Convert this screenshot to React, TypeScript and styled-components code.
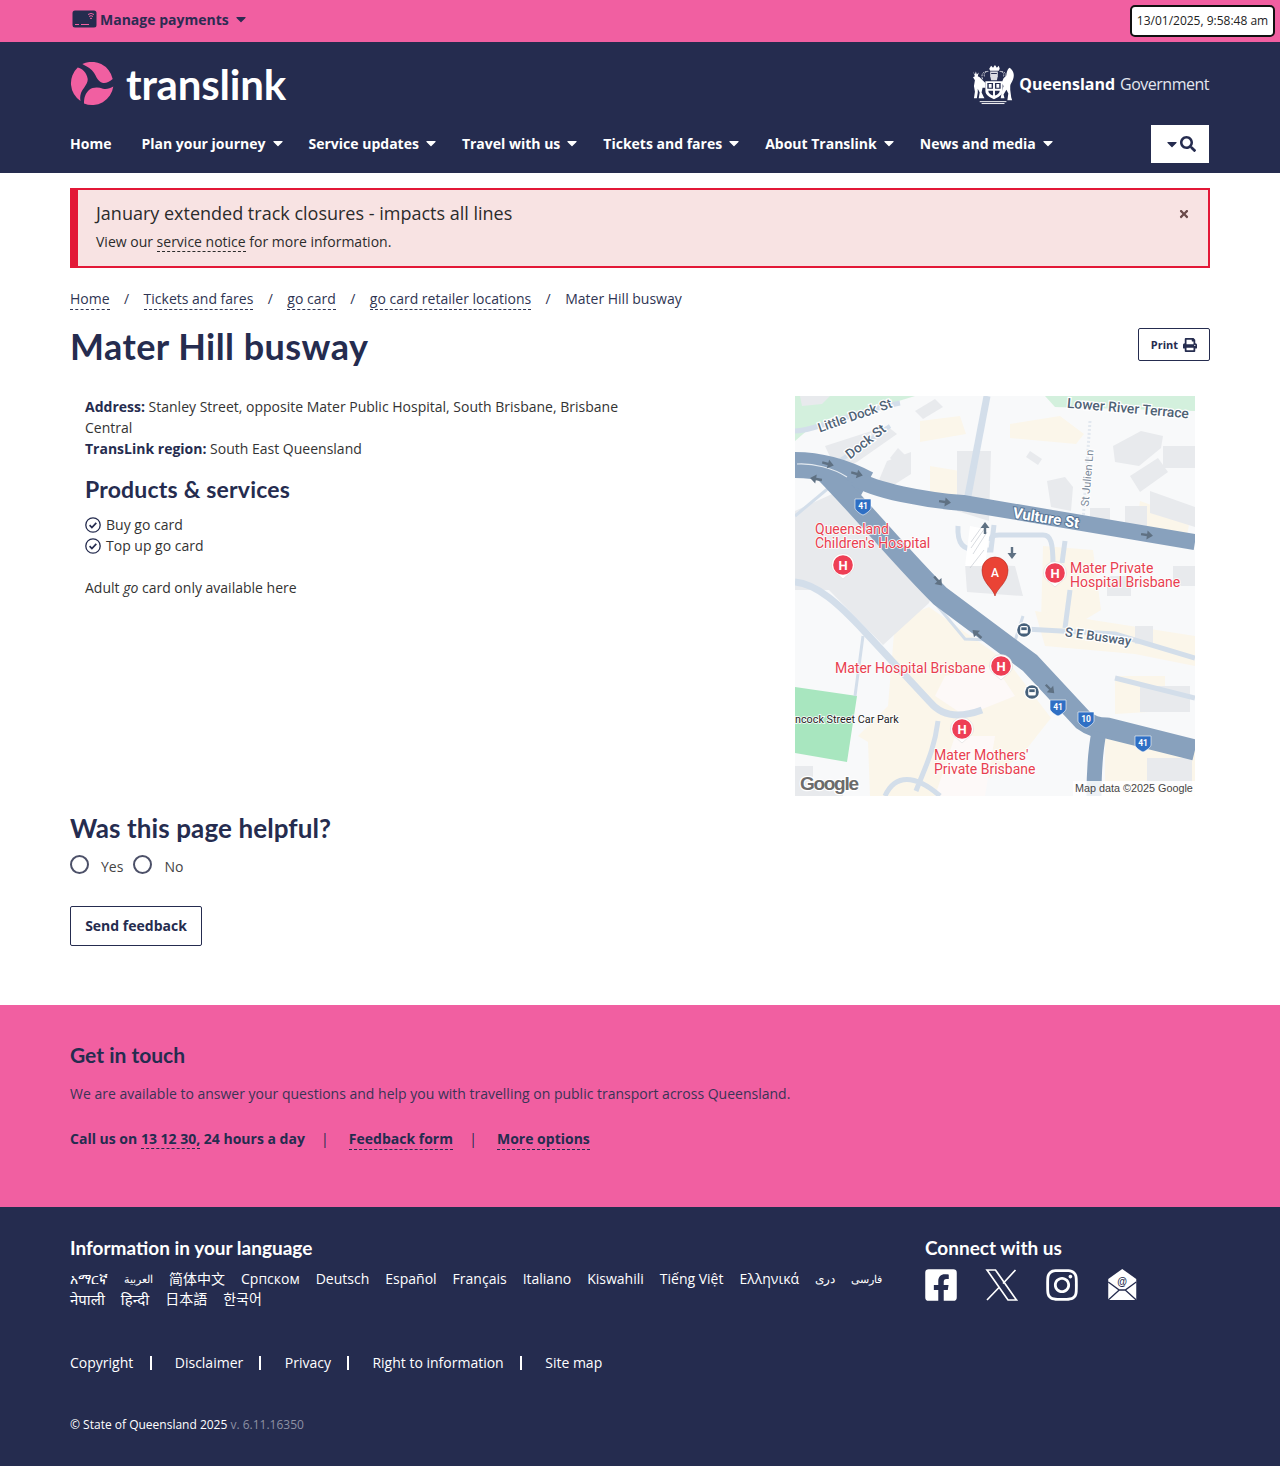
import { createGlobalStyle, styled } from "styled-components";
import { FaCaretDown, FaFacebookSquare, FaInstagram, FaPrint, FaSearch, FaTimes } from "react-icons/fa";

const PINK = "#f15fa1";
const NAVY = "#252c4f";

const GlobalStyle = createGlobalStyle`
  html, body { margin: 0; padding: 0; }
  body {
    font-family: "Open Sans", "Noto Sans", "Noto Sans CJK SC", sans-serif;
    font-size: 14px;
    line-height: 21px;
    color: ${NAVY};
    background: #fff;
  }
  * { box-sizing: border-box; }
`;

const Container = styled.div`
  width: 1140px;
  margin: 0 auto;
`;

const TopBar = styled.div`
  position: relative;
  height: 42px;
  background: ${PINK};
`;

const TopBarInner = styled(Container)`
  height: 38px;
  display: flex;
  align-items: center;
  padding-left: 2px;
`;

const Manage = styled.span`
  display: flex;
  align-items: center;
  font-weight: 700;
  font-size: 14px;
  color: #2d2b52;
`;

const Clock = styled.div`
  position: absolute;
  top: 5px;
  right: 5px;
  width: 145px;
  height: 32px;
  background: #fff;
  border: 2px solid #111;
  border-radius: 5px;
  padding-bottom: 2px;
  display: flex;
  align-items: center;
  justify-content: center;
  font-size: 12px;
  white-space: nowrap;
  color: #222;
`;

const Header = styled.header`
  background: ${NAVY};
  height: 131px;
  color: #fff;
`;

const Brand = styled(Container)`
  height: 83px;
  display: flex;
  align-items: center;
  justify-content: space-between;
`;

const Logo = styled.div`
  display: flex;
  align-items: center;
  gap: 12px;
`;

const LogoText = styled.span`
  font-family: "Lato", sans-serif;
  font-size: 42px;
  line-height: 44px;
  font-weight: 700;
  letter-spacing: -0.2px;
  color: #fff;
`;

const Gov = styled.div`
  display: flex;
  align-items: center;
  gap: 4px;
  padding-right: 1px;
  font-size: 16px;
  color: #e4e6ee;

  span {
    position: relative;
    top: 1px;
    letter-spacing: -0.5px;
  }

  b {
    color: #fff;
    font-weight: 700;
    margin-right: 5px;
    letter-spacing: 0;
  }
`;

const NavRow = styled(Container)`
  display: flex;
  align-items: center;
  justify-content: space-between;
  height: 38px;
  padding-right: 1px;
`;

const Nav = styled.ul`
  display: flex;
  align-items: center;
  list-style: none;
  margin: 0 0 2px;
  padding: 0;
`;

const NavItem = styled.li`
  display: flex;
  align-items: center;
  gap: 4px;
  padding-right: 23px;
  font-size: 14px;
  font-weight: 700;
  color: #fff;
  white-space: nowrap;

  &:first-child {
    padding-right: 30px;
  }
`;

const SearchButton = styled.button`
  width: 58px;
  height: 38px;
  border: 0;
  background: #fff;
  color: ${NAVY};
  display: flex;
  align-items: center;
  justify-content: center;
  gap: 0;
  font-size: 16px;
  padding: 0;
`;

const Alert = styled.div`
  position: relative;
  margin-top: 15px;
  height: 80px;
  background: #f8e3e3;
  border: 2px solid #e31837;
  border-left-width: 8px;
  padding: 11px 18px;
`;

const AlertTitle = styled.div`
  font-size: 18px;
  line-height: 25px;
  color: #2b2b2b;
`;

const AlertText = styled.div`
  margin-top: 5px;
  font-size: 14px;
  line-height: 21px;
  color: #2b2b2b;
`;

const AlertClose = styled.span`
  position: absolute;
  right: 18px;
  top: 18px;
  font-size: 12px;
  color: #6a4a4a;
  display: flex;
`;

const DottedLink = styled.a`
  color: inherit;
  text-decoration: none;
  border-bottom: 1px dashed currentColor;
`;

const Crumbs = styled.nav`
  margin-top: 19px;
  padding-top: 2px;
  height: 23px;
  display: flex;
  align-items: flex-start;
  font-size: 14px;
  line-height: 20px;
  color: #2f3553;
`;

const Slash = styled.span`
  width: 34px;
  text-align: center;
`;

const TitleRow = styled.div`
  margin-top: 14px;
  height: 44px;
  display: flex;
  justify-content: space-between;
  align-items: flex-start;
`;

const Title = styled.h1`
  margin: 0;
  font-family: "Lato", sans-serif;
  font-size: 36px;
  line-height: 44px;
  font-weight: 700;
  letter-spacing: 0.45px;
  color: ${NAVY};
`;

const PrintButton = styled.button`
  margin-top: 4px;
  width: 72px;
  height: 33px;
  border: 1px solid ${NAVY};
  border-radius: 2px;
  background: #fff;
  color: ${NAVY};
  display: flex;
  align-items: center;
  justify-content: center;
  gap: 5px;
  font-family: inherit;
  font-size: 11px;
  font-weight: 700;
  padding: 0;

  svg {
    font-size: 14px;
  }
`;

const ContentRow = styled.div`
  margin-top: 28px;
  display: flex;
  justify-content: space-between;
  padding: 0 15px;
`;

const Details = styled.div`
  width: 560px;
  color: #333;

  b {
    color: ${NAVY};
  }

  p {
    margin: 0;
  }
`;

const SubHeading = styled.h2`
  margin: 15px 0 10px;
  font-family: "Lato", sans-serif;
  font-size: 23px;
  line-height: 30px;
  font-weight: 700;
  letter-spacing: 0.2px;
  color: ${NAVY};
`;

const Services = styled.ul`
  list-style: none;
  margin: 0 0 21px;
  padding: 0;
`;

const Service = styled.li`
  display: flex;
  align-items: center;
  gap: 5px;
`;

const Helpful = styled.section`
  margin-top: 15px;
`;

const HelpfulTitle = styled.h2`
  margin: 0;
  font-family: "Lato", sans-serif;
  font-size: 26px;
  line-height: 34px;
  font-weight: 700;
  letter-spacing: 0.1px;
  color: ${NAVY};
`;

const Radios = styled.div`
  margin-top: 11px;
  display: flex;
  align-items: center;
  color: #444;
`;

const RadioMark = styled.span`
  width: 19px;
  height: 19px;
  border: 2px solid #4c5068;
  border-radius: 50%;
  margin-right: 12px;
  position: relative;
  top: -2px;
`;

const RadioLabel = styled.span`
  margin-right: 10px;
`;

const FeedbackButton = styled.button`
  display: block;
  margin-top: 29px;
  width: 132px;
  height: 40px;
  background: #fff;
  border: 1px solid ${NAVY};
  border-radius: 2px;
  color: ${NAVY};
  font-family: inherit;
  font-size: 14px;
  font-weight: 700;
  padding: 0 0 2px;
`;

const Touch = styled.section`
  margin-top: 59px;
  height: 202px;
  background: ${PINK};
  padding-top: 36px;
`;

const TouchTitle = styled.h2`
  margin: 0;
  font-family: "Lato", sans-serif;
  font-size: 21px;
  line-height: 28px;
  font-weight: 700;
  color: ${NAVY};
`;

const TouchText = styled.p`
  margin: 14px 0 0;
  color: #3a3356;
`;

const TouchLinks = styled.div`
  margin-top: 24px;
  display: flex;
  font-weight: 700;
  color: ${NAVY};
`;

const TouchSep = styled.span`
  width: 44px;
  padding-right: 4px;
  text-align: center;
  font-weight: 400;
`;

const Footer = styled.footer`
  background: ${NAVY};
  height: 259px;
  padding-top: 28px;
  color: #fff;
`;

const FooterTop = styled.div`
  display: flex;
  justify-content: space-between;
  height: 78px;
`;

const FooterHeading = styled.h3`
  margin: 0 0 9px;
  font-family: "Lato", sans-serif;
  font-size: 19px;
  line-height: 25px;
  font-weight: 700;
  color: #fff;
`;

const Languages = styled.div`
  width: 830px;
`;

const LangList = styled.div`
  display: flex;
  flex-wrap: wrap;
  column-gap: 16px;
  line-height: 20px;
  font-size: 14px;
`;

const Lang = styled.span<{ $size?: number }>`
  font-size: ${(p) => p.$size ?? 14}px;
`;

const Connect = styled.div`
  width: 285px;
`;

const Socials = styled.div`
  display: flex;
  align-items: center;
  margin: -2px 0 0 -2px;
  font-size: 36px;

  svg {
    display: block;
  }
`;

const SocialSlot = styled.span`
  width: 60.5px;
  display: flex;
`;

const LegalLinks = styled.div`
  margin-top: 39px;
  display: flex;
  align-items: center;
`;

const LegalLink = styled.span`
  & + &::before {
    content: "";
    display: inline-block;
    width: 2px;
    height: 14px;
    background: #fff;
    margin: 0 23.25px 0 16.25px;
    vertical-align: -2px;
  }
`;

const Copy = styled.div`
  margin-top: 42px;
  font-size: 12px;
  line-height: 20px;

  span {
    color: #8d90a3;
  }
`;

function CardIcon() {
  return (
    <svg width="26" height="18" viewBox="0 0 26 18" style={{ marginRight: 2 }}>
      <rect x="0.5" y="0.5" width="24" height="17" rx="2.5" fill={NAVY} />
      <path d="M3 14.5h4M9 14.5h8" stroke={PINK} strokeWidth="1" />
      <path d="M17 6.5a3 3 0 0 1 4 0M18 8.5a2 2 0 0 1 2 0M16 4.5a5 5 0 0 1 6 0" stroke={PINK} strokeWidth="1" fill="none" />
    </svg>
  );
}

function TranslinkMark() {
  return (
    <svg width="44" height="44" viewBox="0 0 44 44" fill={PINK}>
      <path d="M12.300 2A21.500 21.500 0 0 1 42.700 17C39 20 36 21.500 33 21C27 20 26 12 21.700 8C18.500 5 15 3.500 12.300 2Z" />
      <path d="M7.700 5.500C12 6 17 11 17.700 17C18 22 13 26 11 31C10 34 10 36 10.500 39A21.500 21.500 0 0 1 7.700 5.500Z" />
      <path d="M14 41.500C14 36 15 32 19 28C23 25 28 25 33 26.700C37 27.700 40 26 43.300 24.500A21.500 21.500 0 0 1 14 41.500Z" />
    </svg>
  );
}

function Crest() {
  return (
    <svg width="42" height="42" viewBox="0 0 44 42" fill="#fff">
      <g stroke="#fff" strokeWidth="0.8" fill="none" strokeDasharray="2 1">
        <path d="M10 16C8 10 11 8 15 8M34 16c2-6-1-8-5-8" />
        <path d="M12 13c-1-3 1-6 5-5M32 13c1-3-1-6-5-5" />
      </g>
      <path d="M17 5l2-3 2 2 2-3 2 3 2-2 1 3-1 2H18z" />
      <path d="M18 8h8v5l-1 4h-6l-1-4z" opacity="0.85" />
      <path d="M19 9.500h6v1h-6z" fill={NAVY} />
      <path d="M13 18h18v10c0 5-5 7-9 9-4-2-9-4-9-9z" />
      <path d="M15 20h6v6h-6zM23 20h6v6h-6zM16 28h5v5c-3-1-5-3-5-5zM23 28h5c0 2-2 4-5 5z" fill={NAVY} />
      <path d="M16.500 21h3v4h-3zM24.500 21h3v4h-3z" />
      <path d="M0 8l2 3 1-3 1 3 2-2-1 4 2 1 3 3 3 3 0 5-3 0-1 5 2 4 1 2H6l1-6-2-4 0 4-1 6H1l1-7-1-6 1-6-2-3 2-1z" />
      <path d="M38 4c4 2 6 7 4 12-1 3-3 5-3 7l0 4 1 8 1 3h-5l1-7-2-4-3 5 1 4h-4l1-6 2-7-2-3 2-5 3-3c0-3 1-6 3-8z" />
      <rect x="7" y="39" width="28" height="1" />
      <rect x="9" y="41" width="24" height="1" />
    </svg>
  );
}

function CheckCircle() {
  return (
    <svg width="16" height="16" viewBox="0 0 16 16" fill="none" stroke={NAVY}>
      <circle cx="8" cy="8" r="7.2" strokeWidth="1.3" />
      <path d="M4.6 8.2l2.3 2.3 4.4-4.6" strokeWidth="1.7" />
    </svg>
  );
}

function XLogo() {
  return (
    <svg width="36" height="36" viewBox="0 0 36 36" fill="none" stroke="#fff" strokeWidth="1.700">
      <path d="M3 3h8.500l21 30h-8.500z" />
      <path d="M31.500 3 19 16.500M15 20.500 3 33" />
    </svg>
  );
}

function MailIcon() {
  return (
    <svg width="36" height="32" viewBox="-2.250 0 36 32" fill="#fff">
      <path d="M15 0 29 10v21H1V10Z" />
      <path d="M1 31l11-10M29 31 18 21M1 13l11 8h6l11-8" stroke={NAVY} strokeWidth="1.300" fill="none" />
      <text x="15" y="16" textAnchor="middle" fontSize="10" fontWeight="700" fill={NAVY} fontFamily="Liberation Sans, sans-serif">@</text>
    </svg>
  );
}

function HospitalPin({ x, y }: { x: number; y: number }) {
  return (
    <g transform={`translate(${x} ${y})`}>
      <path d="M-11.500 0a11.500 11.500 0 1 1 23 0c0 5-4 8-7 10l-4.500 4-4.500-4c-3-2-7-5-7-10z" fill="#fff" stroke="#d5d5d5" strokeWidth="0.500" />
      <circle r="9.800" fill="#ee3f55" />
      <text y="4.500" textAnchor="middle" fontSize="13" fontWeight="700" fill="#fff" fontFamily="Roboto, sans-serif">H</text>
    </g>
  );
}

function Shield({ x, y, label }: { x: number; y: number; label: string }) {
  return (
    <g transform={`translate(${x} ${y})`}>
      <path d="M-8-7h16v9c0 2-5 6-8 7-3-1-8-5-8-7z" fill="#2f6fc4" stroke="#fff" strokeWidth="0.600" />
      <text y="2.500" textAnchor="middle" fontSize="8.500" fontWeight="700" fill="#fff" fontFamily="Roboto, sans-serif">{label}</text>
    </g>
  );
}

function BusStop({ x, y }: { x: number; y: number }) {
  return (
    <g transform={`translate(${x} ${y})`}>
      <circle r="8" fill="#fff" />
      <circle r="6.800" fill="#46607a" />
      <rect x="-3.800" y="-4" width="7.600" height="7.500" rx="1.500" fill="#fff" />
      <rect x="-2.700" y="-2.700" width="5.400" height="2.800" fill="#46607a" />
    </g>
  );
}

function RoadArrow({ x, y, angle }: { x: number; y: number; angle: number }) {
  return (
    <path
      transform={`translate(${x} ${y}) rotate(${angle})`}
      d="M-6-1.200h6v-3.300l6 4.500-6 4.500v-3.300h-6z"
      fill="#5f7183"
    />
  );
}

const BUILDINGS = [
  "M5 0h30l-8 8-20 2z",
  "M30 50 92 30l10 8-40 28-20 10z",
  "M92 65l24-9 0 22-22 14-10-8z",
  "M95 62l8-10 12 12-8 10z",
  "M162 55h34l-2 70-32-10z",
  "M235 55l12 8-4 6-12-8z",
  "M252 85l18-4 8 10-2 24-20-4z",
  "M318 50l28-15 22 5-2 12-22 18-24-4z",
  "M335 80l28-18 10 14-28 20z",
  "M368 50h32v22h-32z",
  "M355 95l45 16v20l-45-14z",
  "M330 110h22v30h-22z",
  "M295 112h20v16h-20z",
  "M0 115l48-22 90 102-4 12L88 249 34 194H0z",
  "M8 296l40 8-3 20-37-4z",
  "M170 168l50 2 8 30-56-4z",
  "M352 362h45v30h-45z",
  "M340 230h18v18h-18z",
  "M345 290h50v26h-50z",
  "M120 15l20-12 8 8-20 12z",
  "M312 180h24v20h-24z",
  "M378 170h22v20h-22z",
  "M0 370h18v30H0zM18 384h30v16H18z",
];

const WARM = [
  "M125 25l40-5 6 18-46 8z",
  "M215 28l50-8 24 18-8 10-66-6z",
  "M135 70l30 5-5 34-25-5z",
  "M248 150l50 4 8 60-20 12-40 0z",
  "M345 105l50 18-4 22-50-14z",
  "M100 225l34-14 80 56 42 55-30 38-60 40H75l-2-54-10-6 30-30z",
  "M240 215l160 25v30l-60-12-90-8z",
  "M310 335l90 20v45h-90z",
  "M320 280h50v35l-50 3z",
];

function MapDrawing() {
  return (
    <svg width="400" height="400" viewBox="0 0 400 400" fontFamily="Roboto, sans-serif" style={{ display: "block", flex: "none" }}>
      <rect width="400" height="400" fill="#f8f9fa" />
      <path d="M0 0h120L15 32 0 45zM250 0h150v15l-140-4z" fill="#c3ecd0" opacity="0.700" />
      {WARM.map((d) => <path key={d} d={d} fill="#fbf6ea" />)}
      {BUILDINGS.map((d) => <path key={d} d={d} fill="#e8eaed" />)}
      <path d="M150 280l50-10 20 30-50 20-30-20zM160 340h40l-10 60h-50z" fill="#fdf9f8" />
      <path d="M0 291l62 9-10 66-52-9z" fill="#a8e6bf" />

      <g fill="none" stroke="#d3deea" strokeWidth="5">
        <path d="M0 35c20 0 60-20 105-28" />
        <path d="M40 68 95 30" strokeWidth="4" />
        <path d="M192 0 172 105" strokeWidth="7" />
        <path d="M0 120l48-40" strokeWidth="3" />
        <path d="M295 25 288 125" stroke="#e2e8ef" strokeWidth="3" strokeDasharray="2 2" />
        <path d="M163 130c-1 18 5 24 20 24h13l3-25" />
        <path d="M196 145c0-5 2-6 8-6h44c8 0 10 8 10 30" />
        <path d="M270 145l-3 22" />
        <path d="M0 186c22 2 44 22 70 50l65 70c10 12 25 18 52 8" strokeWidth="7" />
        <path d="M68 240 60 300" strokeWidth="3" />
        <path d="M143 325c-4 30-12 44-22 70M90 400c10-22 30-22 55 0" />
        <path d="M130 195l40 48 50 2 8-25" strokeWidth="3" />
        <path d="M230 233l90 5 80 24" />
        <path d="M275 194 270 232" />
        <path d="M320 282l80 20" />
      </g>
      <path d="M175 130l20 4-5 36h-20z" fill="#fff" />
      <g stroke="#c7cbd2" strokeWidth="0.700">
        <path d="M176 146l10-14M176 152l14-20M178 158l14-22M175 172l14-18" />
      </g>

      <g fill="none" stroke="#88a1bd" strokeLinejoin="round">
        <path d="M0 69c30 0 55 10 72 19" strokeWidth="26" />
        <path d="M60 82c20 13 70 22 108 25l232 39" strokeWidth="16" />
        <path d="M28 74c35 35 82 92 117 126l90 67 53 57c8 6 14 8 24 8l88 22" strokeWidth="21" />
        <path d="M304 336c-4 20-5 40-5 64" strokeWidth="15" />
      </g>
      <path d="M2 68c16-1 36 4 50 13" stroke="#e4eaf0" strokeWidth="1.200" fill="none" />

      <RoadArrow x={33} y={68} angle={15} />
      <RoadArrow x={62} y={78} angle={15} />
      <RoadArrow x={21} y={83} angle={190} />
      <RoadArrow x={150} y={106} angle={8} />
      <RoadArrow x={352} y={139} angle={8} />
      <RoadArrow x={143} y={185} angle={50} />
      <RoadArrow x={182} y={238} angle={222} />
      <RoadArrow x={255} y={293} angle={45} />
      <RoadArrow x={190} y={132} angle={-90} />
      <RoadArrow x={217} y={157} angle={90} />

      <g fontWeight="500" fontSize="13" fill="#4f6275" stroke="#fff" strokeWidth="2.500" paintOrder="stroke">
        <text x="60" y="24" textAnchor="middle" transform="rotate(-19 60 20)">Little Dock St</text>
        <text x="71" y="50" textAnchor="middle" fontSize="13.500" transform="rotate(-38 71 46)">Dock St</text>
        <text x="333" y="17" fontSize="13.800" textAnchor="middle" transform="rotate(5 333 12)">Lower River Terrace</text>
        <text x="303" y="245" textAnchor="middle" transform="rotate(8 303 241)">S E Busway</text>
      </g>
      <text x="292" y="86" textAnchor="middle" fontSize="11" fill="#7c8a9a" transform="rotate(-85 292 82)" stroke="#fff" strokeWidth="2" paintOrder="stroke">St Julien Ln</text>
      <text x="251" y="127" textAnchor="middle" fontSize="15" fontWeight="700" fill="#fff" stroke="#4f6f92" strokeWidth="1.800" paintOrder="stroke" transform="rotate(9 251 122)">Vulture St</text>

      <g fontSize="14" fill="#e8404f" stroke="#fff" strokeWidth="1.500" paintOrder="stroke">
        <text x="20" y="138">Queensland</text>
        <text x="20" y="152">Children's Hospital</text>
        <text x="275" y="177">Mater Private</text>
        <text x="275" y="191">Hospital Brisbane</text>
        <text x="40" y="277">Mater Hospital Brisbane</text>
        <text x="139" y="364">Mater Mothers'</text>
        <text x="139" y="378">Private Brisbane</text>
      </g>
      <text x="0" y="327" fontSize="10.800" fill="#222" stroke="#fff" strokeWidth="1.500" paintOrder="stroke">ncock Street Car Park</text>

      <HospitalPin x={48} y={169} />
      <HospitalPin x={260} y={177} />
      <HospitalPin x={206} y={270} />
      <HospitalPin x={167} y={333} />
      <BusStop x={229} y={234} />
      <BusStop x={237} y={296} />
      <Shield x={68} y={110} label="41" />
      <Shield x={263} y={311} label="41" />
      <Shield x={348} y={347} label="41" />
      <Shield x={291} y={323} label="10" />

      <path d="M200 200c-2-8-13-13-13-26a13 13 0 1 1 26 0c0 13-11 18-13 26z" fill="#ea4335" stroke="#b3271e" strokeWidth="0.600" />
      <text x="200" y="181" textAnchor="middle" fontSize="12" fontWeight="500" fill="#fff">A</text>

      <text x="5" y="394" fontSize="19" fontWeight="700" fill="#6b6b6b" stroke="#fff" strokeWidth="2.500" paintOrder="stroke" fontFamily="Liberation Sans, sans-serif" letterSpacing="-1.300">Google</text>
      <rect x="278" y="385" width="122" height="15" fill="#fff" opacity="0.850" />
      <text x="280" y="396" fontSize="10.800" fill="#444" fontFamily="Liberation Sans, sans-serif">Map data ©2025 Google</text>
    </svg>
  );
}

const LANGUAGES: { label: string; size?: number }[] = [
  { label: "አማርኛ" },
  { label: "العربية", size: 11 },
  { label: "简体中文" },
  { label: "Српском" },
  { label: "Deutsch" },
  { label: "Español" },
  { label: "Français" },
  { label: "Italiano" },
  { label: "Kiswahili" },
  { label: "Tiếng Việt" },
  { label: "Ελληνικά" },
  { label: "دری", size: 11.5 },
  { label: "فارسی", size: 11 },
  { label: "नेपाली", size: 15 },
  { label: "हिन्दी", size: 15 },
  { label: "日本語" },
  { label: "한국어" },
];

const NAV_ITEMS = ["Plan your journey", "Service updates", "Travel with us", "Tickets and fares", "About Translink", "News and media"];

function App() {
  return (
    <>
      <GlobalStyle />
      <TopBar>
        <TopBarInner>
          <Manage>
            <CardIcon />
            Manage payments
            <FaCaretDown size={16} style={{ marginLeft: 4 }} />
          </Manage>
        </TopBarInner>
        <Clock>13/01/2025, 9:58:48 am</Clock>
      </TopBar>

      <Header>
        <Brand>
          <Logo>
            <TranslinkMark />
            <LogoText>translink</LogoText>
          </Logo>
          <Gov>
            <Crest />
            <span><b>Queensland</b>Government</span>
          </Gov>
        </Brand>
        <NavRow>
          <Nav>
            <NavItem>Home</NavItem>
            {NAV_ITEMS.map((item) => (
              <NavItem key={item}>
                {item}
                <FaCaretDown size={16} />
              </NavItem>
            ))}
          </Nav>
          <SearchButton>
            <FaCaretDown size={16} />
            <FaSearch />
          </SearchButton>
        </NavRow>
      </Header>

      <Container>
        <Alert>
          <AlertTitle>January extended track closures - impacts all lines</AlertTitle>
          <AlertText>View our <DottedLink>service notice</DottedLink> for more information.</AlertText>
          <AlertClose><FaTimes /></AlertClose>
        </Alert>

        <Crumbs>
          <DottedLink>Home</DottedLink>
          <Slash>/</Slash>
          <DottedLink>Tickets and fares</DottedLink>
          <Slash>/</Slash>
          <DottedLink>go card</DottedLink>
          <Slash>/</Slash>
          <DottedLink>go card retailer locations</DottedLink>
          <Slash>/</Slash>
          <span>Mater Hill busway</span>
        </Crumbs>

        <TitleRow>
          <Title>Mater Hill busway</Title>
          <PrintButton>Print <FaPrint /></PrintButton>
        </TitleRow>

        <ContentRow>
          <Details>
            <p><b>Address:</b> Stanley Street, opposite Mater Public Hospital, South Brisbane, Brisbane Central</p>
            <p><b>TransLink region:</b> South East Queensland</p>
            <SubHeading>Products &amp; services</SubHeading>
            <Services>
              <Service><CheckCircle /> Buy go card</Service>
              <Service><CheckCircle /> Top up go card</Service>
            </Services>
            <p>Adult <i>go</i> card only available here</p>
          </Details>
          <MapDrawing />
        </ContentRow>

        <Helpful>
          <HelpfulTitle>Was this page helpful?</HelpfulTitle>
          <Radios>
            <RadioMark />
            <RadioLabel>Yes</RadioLabel>
            <RadioMark />
            <RadioLabel>No</RadioLabel>
          </Radios>
          <FeedbackButton>Send feedback</FeedbackButton>
        </Helpful>
      </Container>

      <Touch>
        <Container>
          <TouchTitle>Get in touch</TouchTitle>
          <TouchText>We are available to answer your questions and help you with travelling on public transport across Queensland.</TouchText>
          <TouchLinks>
            <span>Call us on <DottedLink>13 12 30,</DottedLink> 24 hours a day</span>
            <TouchSep>|</TouchSep>
            <DottedLink>Feedback form</DottedLink>
            <TouchSep>|</TouchSep>
            <DottedLink>More options</DottedLink>
          </TouchLinks>
        </Container>
      </Touch>

      <Footer>
        <Container>
          <FooterTop>
            <Languages>
              <FooterHeading>Information in your language</FooterHeading>
              <LangList>
                {LANGUAGES.map((lang) => <Lang key={lang.label} $size={lang.size}>{lang.label}</Lang>)}
              </LangList>
            </Languages>
            <Connect>
              <FooterHeading>Connect with us</FooterHeading>
              <Socials>
                <SocialSlot><FaFacebookSquare /></SocialSlot>
                <SocialSlot><XLogo /></SocialSlot>
                <SocialSlot><FaInstagram /></SocialSlot>
                <SocialSlot><MailIcon /></SocialSlot>
              </Socials>
            </Connect>
          </FooterTop>
          <LegalLinks>
            <LegalLink>Copyright</LegalLink>
            <LegalLink>Disclaimer</LegalLink>
            <LegalLink>Privacy</LegalLink>
            <LegalLink>Right to information</LegalLink>
            <LegalLink>Site map</LegalLink>
          </LegalLinks>
          <Copy>© State of Queensland 2025 <span>v. 6.11.16350</span></Copy>
        </Container>
      </Footer>
    </>
  );
}

export default App;
